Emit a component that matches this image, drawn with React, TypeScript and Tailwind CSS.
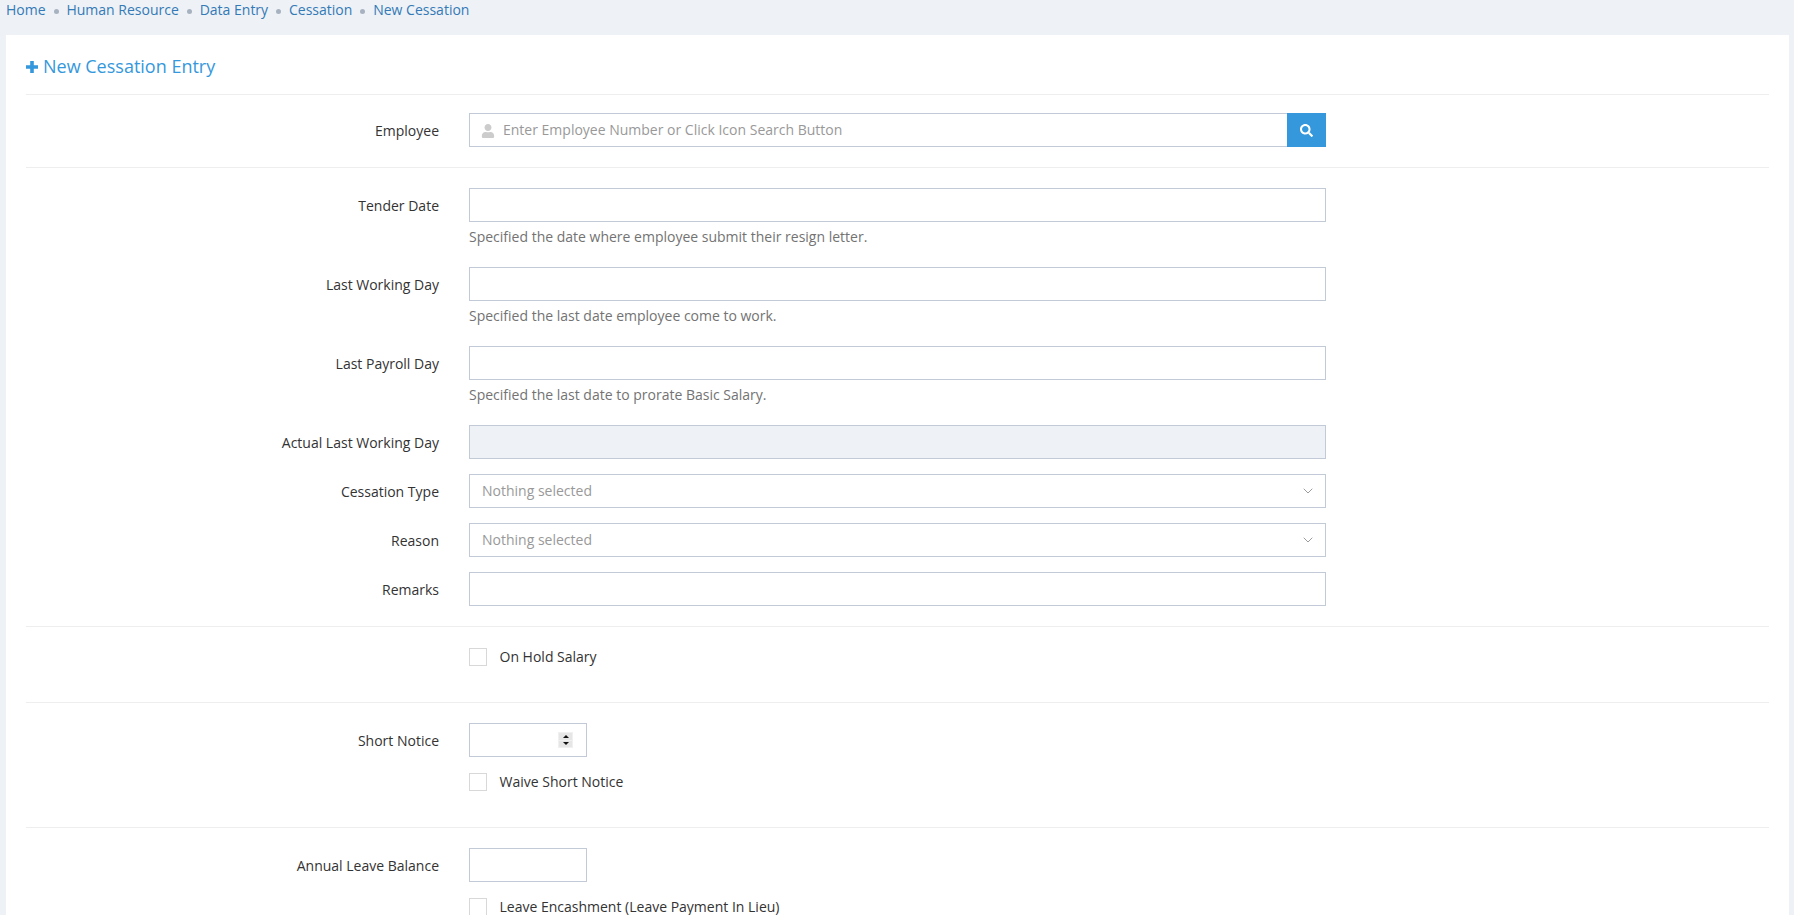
import { ChevronDown } from 'lucide-react';
import { FaSearch, FaUser } from 'react-icons/fa';

const crumbs = ['Home', 'Human Resource', 'Data Entry', 'Cessation', 'New Cessation'];
const inputClass = 'block h-[34px] w-full border border-[#c2cad8] px-3 text-[14px] outline-none';

function Row({ label, children }: { label?: string; children: React.ReactNode }) {
  return (
    <div className="flex items-start">
      <label className="w-[413px] shrink-0 pt-[8px] text-right text-[14px] leading-5 text-[#333]">{label}</label>
      <div className="ml-[30px] w-[857px]">{children}</div>
    </div>
  );
}

function Help({ children }: { children: React.ReactNode }) {
  return <p className="mb-[5px] mt-[5px] text-[14px] leading-5 text-[#737373]">{children}</p>;
}

function Select() {
  return (
    <div className="flex h-[34px] items-center justify-between border border-[#c2cad8] bg-white pl-[12px] pr-[9px] text-[14px] text-[#999]">
      <span className="pb-[2px]">Nothing selected</span>
      <ChevronDown className="size-4 text-[#888]" strokeWidth={1.25} />
    </div>
  );
}

function Check({ label }: { label: string }) {
  return (
    <label className="flex h-[18px] items-center text-[14px] text-[#333]">
      <span className="mr-[12.5px] size-[18px] shrink-0 border border-[#d8d8d8] bg-white" />
      <span className="pb-[2px]">{label}</span>
    </label>
  );
}

export default function App() {
  return (
    <div className="h-[915px] overflow-hidden bg-[#eef1f5] font-['Open_Sans',sans-serif]">
      {/* Breadcrumb */}
      <div className="flex h-[35px] items-start px-[6px] text-[14px] leading-[20px] text-[#337ab7]">
        {crumbs.map((crumb, i) => (
          <div key={crumb} className="flex items-center">
            {i > 0 && <span className="mx-[7.95px] mt-[3px] size-[5px] rounded-full bg-[#a7b2c0]" />}
            <a href="#">{crumb}</a>
          </div>
        ))}
      </div>

      <div className="ml-[6px] mr-[5px] h-[880px] bg-white px-[20px]">
        {/* Title */}
        <div className="flex h-[60px] items-center gap-[5px] border-b border-[#eee] pt-[4px] text-[18px] text-[#3598dc]">
          <svg viewBox="0 0 12 12" className="size-[12px] fill-current">
            <path d="M4.2 0h3.6v4.2H12v3.6H7.8V12H4.2V7.8H0V4.2h4.2z" />
          </svg>
          <span>New Cessation Entry</span>
        </div>

        {/* Employee */}
        <div className="border-b border-[#eee] pb-[20px] pt-[18px]">
          <Row label="Employee">
            <div className="flex h-[34px]">
              <div className="relative grow">
                <FaUser className="absolute left-[12px] top-[11px] size-[14px] text-[#ccc]" />
                <input
                  className="block h-[34px] w-full border border-r-0 border-[#c2cad8] pb-[2px] pl-[33px] pr-3 text-[14px] outline-none placeholder:text-[#999]"
                  placeholder="Enter Employee Number or Click Icon Search Button"
                />
              </div>
              <button className="flex h-[34px] w-[39px] items-center justify-center bg-[#3598dc] text-white">
                <FaSearch className="size-[13px]" />
              </button>
            </div>
          </Row>
        </div>

        {/* Dates */}
        <div className="flex flex-col gap-[15px] border-b border-[#eee] pb-[20px] pt-[20px]">
          <Row label="Tender Date">
            <input className={inputClass} />
            <Help>Specified the date where employee submit their resign letter.</Help>
          </Row>
          <Row label="Last Working Day">
            <input className={inputClass} />
            <Help>Specified the last date employee come to work.</Help>
          </Row>
          <Row label="Last Payroll Day">
            <input className={inputClass} />
            <Help>Specified the last date to prorate Basic Salary.</Help>
          </Row>
          <Row label="Actual Last Working Day">
            <input className={`${inputClass} bg-[#eef1f5]`} disabled />
          </Row>
          <Row label="Cessation Type">
            <Select />
          </Row>
          <Row label="Reason">
            <Select />
          </Row>
          <Row label="Remarks">
            <input className={inputClass} />
          </Row>
        </div>

        {/* On hold */}
        <div className="h-[76px] border-b border-[#eee] pt-[21px]">
          <Row>
            <Check label="On Hold Salary" />
          </Row>
        </div>

        {/* Short notice */}
        <div className="h-[125px] border-b border-[#eee] pt-[20px]">
          <Row label="Short Notice">
            <div className="relative w-[118px]">
              <input type="number" className={`${inputClass} [&::-webkit-inner-spin-button]:appearance-none`} />
              {/* spinner */}
              <div className="absolute left-[89px] top-[9px] flex h-[16px] w-[15px] flex-col gap-px bg-[#f0f0f0] p-px">
                <div className="flex flex-1 items-center justify-center bg-[#e6e6e6]">
                  <svg viewBox="0 0 6 3" className="h-[3px] w-[6px]">
                    <path d="M3 0 6 3H0z" fill="#111" />
                  </svg>
                </div>
                <div className="flex flex-1 items-center justify-center bg-[#e6e6e6]">
                  <svg viewBox="0 0 6 3" className="h-[3px] w-[6px]">
                    <path d="M0 0h6L3 3z" fill="#111" />
                  </svg>
                </div>
              </div>
            </div>
            <div className="mt-[16px]">
              <Check label="Waive Short Notice" />
            </div>
          </Row>
        </div>

        {/* Leave balance */}
        <div className="pt-[20px]">
          <Row label="Annual Leave Balance">
            <input className={`${inputClass} w-[118px]!`} />
            <div className="mt-[16px]">
              <Check label="Leave Encashment (Leave Payment In Lieu)" />
            </div>
          </Row>
        </div>
      </div>
    </div>
  );
}
